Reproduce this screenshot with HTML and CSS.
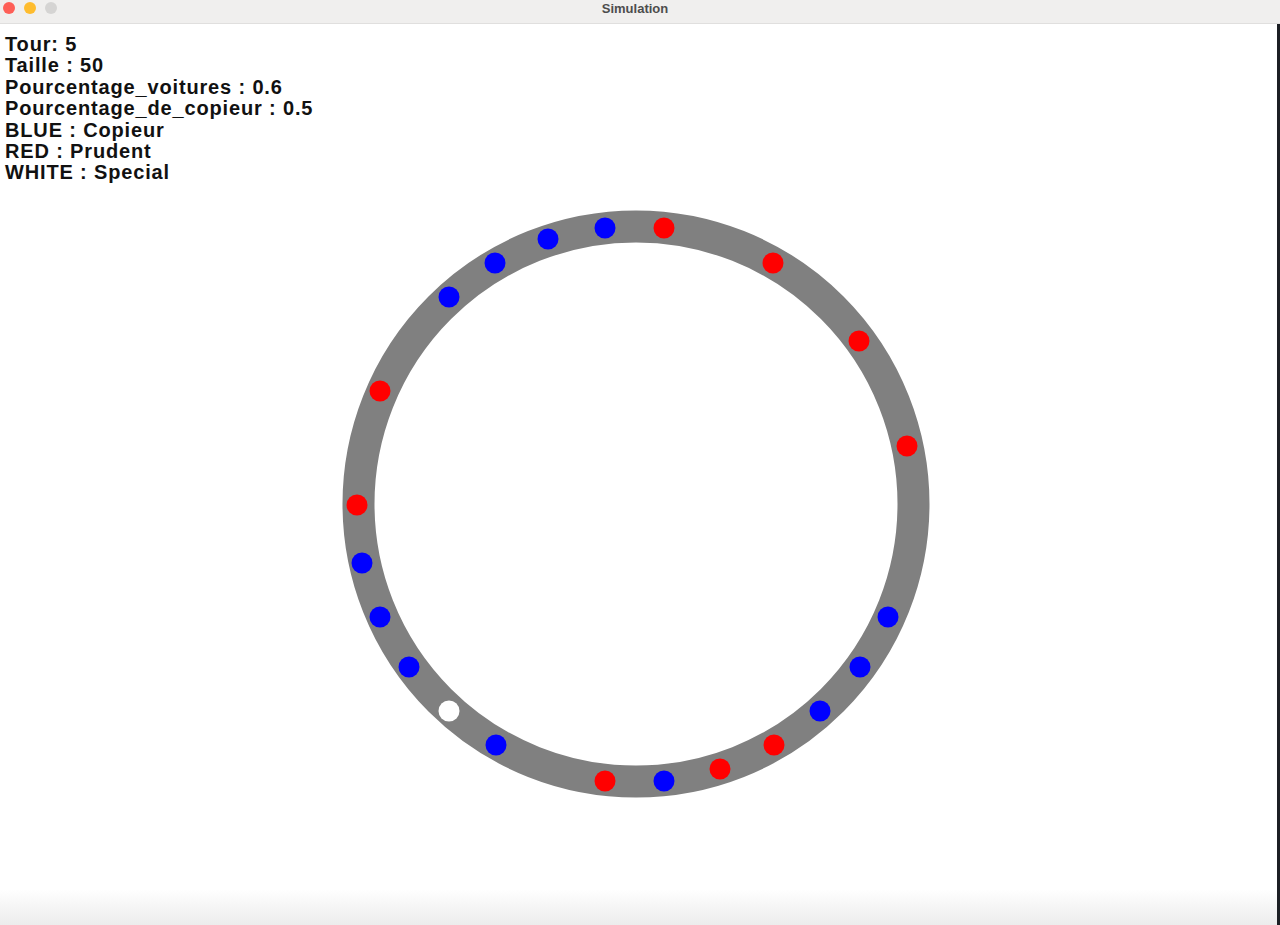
FILE: index.html
```html
<!DOCTYPE html>
<html lang="fr">
<head>
<meta charset="utf-8">
<title>Simulation</title>
<link rel="stylesheet" href="styles.css">
</head>
<body>
<div class="window">
  <header class="titlebar">
    <div class="lights">
      <span class="light close"></span>
      <span class="light min"></span>
      <span class="light max"></span>
    </div>
    <div class="title">Simulation</div>
  </header>
  <main class="canvas">
    <div class="info">
      <div>Tour: 5</div>
      <div>Taille : 50</div>
      <div>Pourcentage_voitures : 0.6</div>
      <div>Pourcentage_de_copieur : 0.5</div>
      <div>BLUE : Copieur</div>
      <div>RED : Prudent</div>
      <div>WHITE : Special</div>
    </div>
    <svg class="track" width="1280" height="901" viewBox="0 24 1280 901" xmlns="http://www.w3.org/2000/svg">
      <circle cx="636" cy="504" r="277.5" fill="none" stroke="#808080" stroke-width="32"/>
      <g class="red" fill="#ff0000">
        <circle cx="664" cy="228" r="10.5"/>
        <circle cx="773" cy="263" r="10.5"/>
        <circle cx="859" cy="341" r="10.5"/>
        <circle cx="907" cy="446" r="10.5"/>
        <circle cx="380" cy="391" r="10.5"/>
        <circle cx="357" cy="505" r="10.5"/>
        <circle cx="774" cy="745" r="10.5"/>
        <circle cx="720" cy="769" r="10.5"/>
        <circle cx="605" cy="781" r="10.5"/>
      </g>
      <g class="blue" fill="#0000ff">
        <circle cx="605" cy="228" r="10.5"/>
        <circle cx="548" cy="239" r="10.5"/>
        <circle cx="495" cy="263" r="10.5"/>
        <circle cx="449" cy="297" r="10.5"/>
        <circle cx="362" cy="563" r="10.5"/>
        <circle cx="380" cy="617" r="10.5"/>
        <circle cx="409" cy="667" r="10.5"/>
        <circle cx="496" cy="745" r="10.5"/>
        <circle cx="664" cy="781" r="10.5"/>
        <circle cx="820" cy="711" r="10.5"/>
        <circle cx="860" cy="667" r="10.5"/>
        <circle cx="888" cy="617" r="10.5"/>
      </g>
      <circle cx="449" cy="711" r="10.5" fill="#ffffff"/>
    </svg>
  </main>
  <div class="edge"></div>
</div>
</body>
</html>
```

FILE: styles.css
```css
html, body {
  margin: 0;
  padding: 0;
  width: 1280px;
  height: 925px;
  overflow: hidden;
  background: #ffffff;
}

.window {
  position: relative;
  width: 1280px;
  height: 925px;
  display: flex;
  flex-direction: column;
  background: #ffffff;
}

.titlebar {
  position: relative;
  height: 23px;
  flex: 0 0 23px;
  background: #f0efee;
  border-bottom: 1px solid #e0dfde;
  display: flex;
  align-items: center;
  justify-content: center;
}

.lights {
  position: absolute;
  left: 3px;
  top: 2px;
  display: flex;
  gap: 9px;
}

.light {
  width: 12px;
  height: 12px;
  border-radius: 50%;
  display: block;
}

.close { background: #fe5f57; }
.min { background: #febc2e; }
.max { background: #d5d4d3; }

.title {
  font-family: "Liberation Sans", Arial, sans-serif;
  font-weight: bold;
  font-size: 13px;
  color: #4d4d4d;
  margin-top: -7px;
  margin-right: 10px;
}

.canvas {
  position: relative;
  flex: 1;
  background: linear-gradient(to bottom, #ffffff 0, #ffffff 865px, #ececec 901px);
}

.info {
  position: relative;
  z-index: 1;
  padding: 10px 0 0 5px;
  font-family: "Liberation Sans", Arial, sans-serif;
  font-weight: bold;
  font-size: 20px;
  line-height: 21.4px;
  letter-spacing: 0.85px;
  color: #111111;
}

.track {
  position: absolute;
  left: 0;
  top: 0;
}

.edge {
  position: absolute;
  right: 0;
  top: 24px;
  width: 3px;
  height: 901px;
  background: #1c1f24;
}
```
